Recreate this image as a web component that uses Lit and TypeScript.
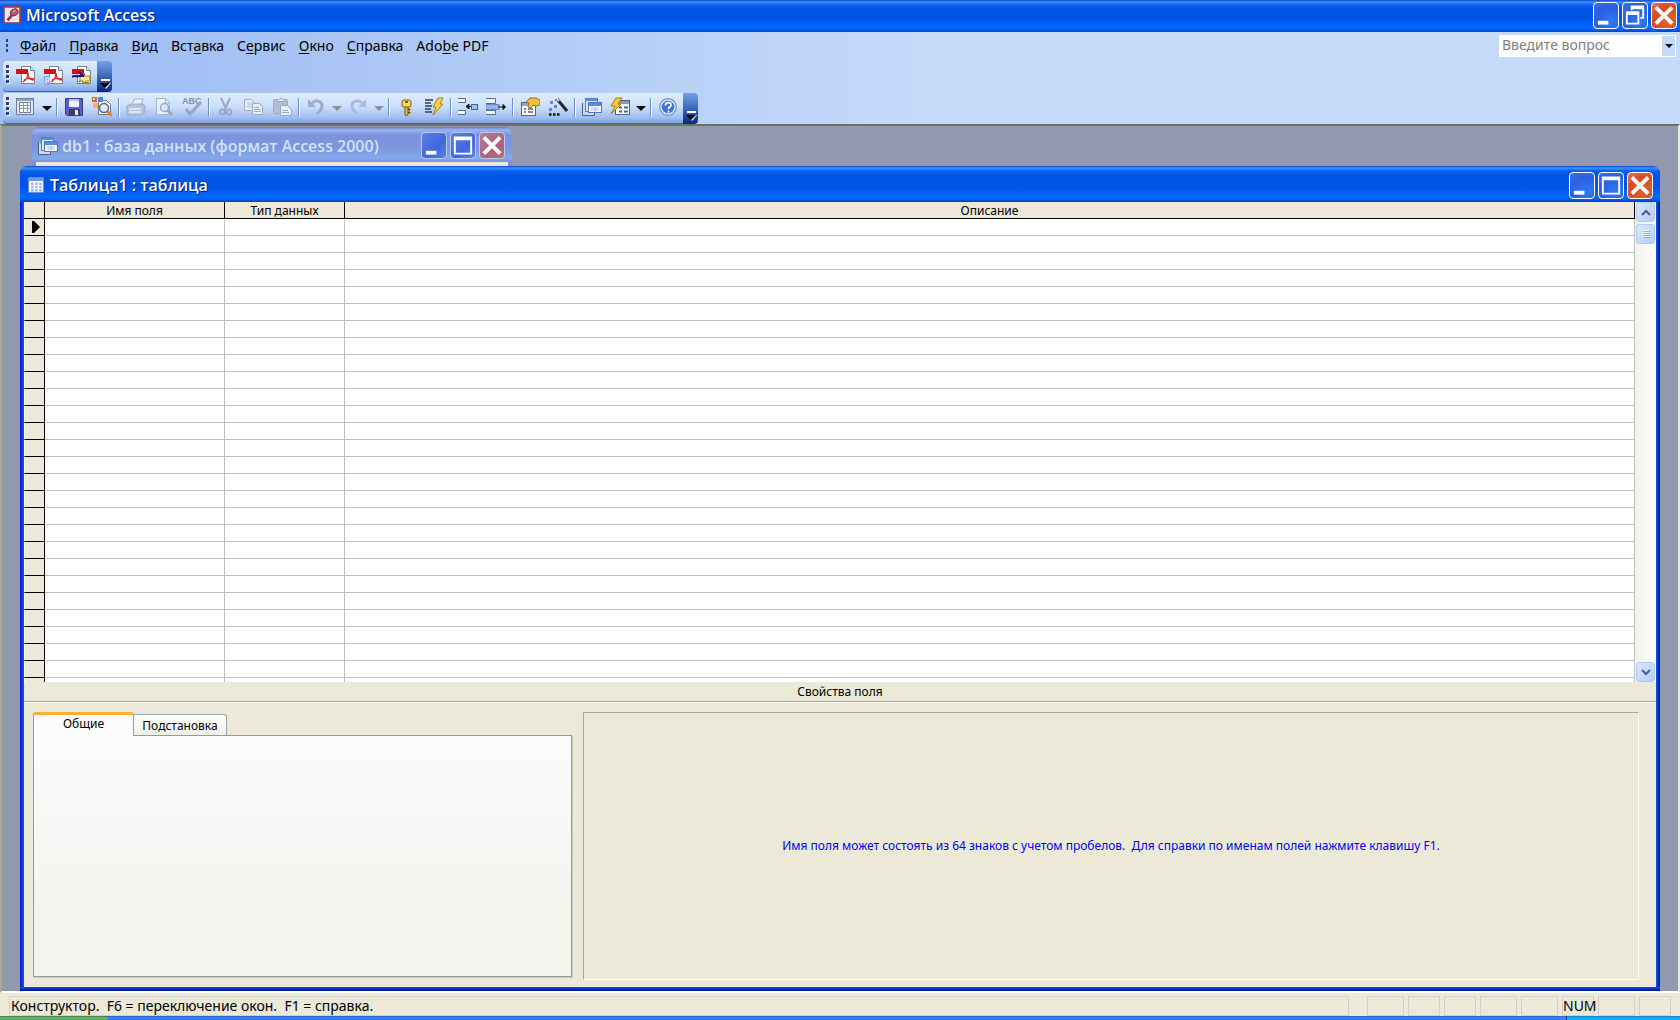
import { LitElement, html, svg, css, nothing, SVGTemplateResult } from "lit";
import { customElement, property, state } from "lit/decorators.js";
import { classMap } from "lit/directives/class-map.js";

const pdfPage = (extra: SVGTemplateResult) => svg`
  <path d="M5.500 1.500h9l4 4v13h-13z" fill="#fff" stroke="#7f8387"/>
  <path d="M14.500 1.500v4h4" fill="#dfe3ea" stroke="#7f8387"/>
  <rect x="0" y="4" width="12" height="5" fill="#d90f14"/>
  <path d="M12 8c0 5 3 7 6 7M12 8c0 4-2 7-5 9M8 15c3-2 6-2 10-1" fill="none" stroke="#e0262a" stroke-width="1.400"/>
  ${extra}`;

const lens = (x: number, y: number, tone: string, handle: string) => svg`
  <path d="M${x + 3} ${y + 3}l4 4" stroke="${handle}" stroke-width="3" stroke-linecap="round"/>
  <circle cx="${x}" cy="${y}" r="4.500" fill="#dcebfb" stroke="${tone}" stroke-width="1.500"/>`;

const ICONS: Record<string, SVGTemplateResult> = {
  pdf: pdfPage(svg``),
  pdfMail: pdfPage(svg`<rect x="0" y="11" width="6" height="9" fill="#7faaf2"/><path d="M2 19v-6h3v3H3" stroke="#fff" fill="none"/>`),
  pdfReview: pdfPage(svg`
    <path d="M8 11h10v5h-4l-3 3v-3H8z" fill="#f5e88a" stroke="#9b8520"/>
    <path d="M10 18h7" stroke="#9b8520" stroke-width="2"/>
    <path d="M0 12c4-3 5 1 7-1l5 0M7 7l4 4" fill="none" stroke="#12157e" stroke-width="2"/>`),
  view: svg`
    <rect x=".5" y="1.500" width="17" height="16" fill="#dfe6f2" stroke="#6f7f9b"/>
    <rect x="1" y="2" width="16" height="2" fill="#8ea5cf"/>
    <path d="M3.500 5.500h11v10h-11z" fill="#fff" stroke="#6c7a94"/>
    <path d="M3 8.500h12M3 11.500h12M7.500 5v11M11.500 5v11" stroke="#8b97ae"/>`,
  save: svg`
    <path d="M1.500 1.500h17v17H3l-1.500-1.500z" fill="#5b5fcd" stroke="#3a3a95"/>
    <rect x="5" y="2" width="10" height="8" fill="#eef3ff"/>
    <rect x="5" y="2" width="10" height="2" fill="#b9c4ee"/>
    <rect x="5" y="12" width="11" height="6.500" fill="#3b3b63"/>
    <rect x="11" y="13" width="3" height="5" fill="#e9eefb"/>`,
  search: svg`
    <path d="M6.500 3.500h8l4 4v10h-12z" fill="#f7fafe" stroke="#68778f"/>
    <rect x="0" y="0" width="5" height="5" fill="#ec5a26"/>
    <rect x="6" y="0" width="5" height="5" fill="#4c86e8"/>
    <rect x="1" y="6" width="5" height="5" fill="#f4bd2d"/>
    <rect x="1" y="1" width="2" height="2" fill="#ffd3a8"/>
    ${lens(12, 11, "#59697f", "#e08a1c")}`,
  print: svg`
    <path d="M6 8l2-6h9l-2 6z" fill="#eff4fc" stroke="#a3b2cd"/>
    <path d="M1 9l4-2h12l2 2v6l-3 3H1z" fill="#b4c2db" stroke="#9aaac8"/>
    <path d="M3 12h12M3 15h12" stroke="#eef3fb" stroke-width="1.500"/>`,
  preview: svg`
    <path d="M2.500 1.500h9l4 4v12h-13z" fill="#e9f0fb" stroke="#a3b2cd"/>
    <path d="M11.500 2v4h4" fill="none" stroke="#a3b2cd"/>
    <path d="M13 13l5 5" stroke="#98a8c6" stroke-width="3"/>
    <circle cx="10.500" cy="10.500" r="4" fill="#dbe7f8" stroke="#98a8c6" stroke-width="1.500"/>`,
  spell: svg`
    <text x="0" y="7" font-size="9" font-weight="700" font-family="Liberation Sans, sans-serif" fill="#8091b8">ABC</text>
    <path d="M4 12l4 5L19 5" fill="none" stroke="#94a5c8" stroke-width="3"/>`,
  cut: svg`
    <path d="M5 1l5 11M14 1L9 12" stroke="#98a8c6" stroke-width="2"/>
    <circle cx="6.500" cy="15" r="2.500" fill="none" stroke="#98a8c6" stroke-width="2"/>
    <circle cx="13" cy="15" r="2.500" fill="none" stroke="#98a8c6" stroke-width="2"/>`,
  copy: svg`
    <path d="M.5 2.500h7l3 3v8h-10z" fill="#e6eefb" stroke="#9fafcb"/>
    <path d="M3 6h5M3 8h5M3 10h5" stroke="#b2c0d8"/>
    <path d="M8.500 6.500h7l3 3v8h-10z" fill="#e6eefb" stroke="#98a8c6"/>
    <path d="M10 10.500h5M10 12.500h7M10 14.500h7" stroke="#9fafcb"/>`,
  paste: svg`
    <rect x="1.500" y="2.500" width="14" height="14" rx="1" fill="#b1bfd8" stroke="#98a8c6"/>
    <path d="M5 4.500v-2h2l1-1h2l1 1h2v2z" fill="#dbe5f5" stroke="#98a8c6"/>
    <path d="M8.500 8.500h7l4 4v6h-11z" fill="#e9f0fb" stroke="#98a8c6"/>
    <path d="M10 13.500h6M10 15.500h7" stroke="#98a8c6"/>`,
  undo: svg`
    <path d="M6 6c4-4 10-2 10 3 0 4-3 6-5 8" fill="none" stroke="#9badd0" stroke-width="3"/>
    <path d="M2 2v8h8z" fill="#9badd0"/>`,
  redo: svg`
    <path d="M14 6C10 2 4 4 4 9c0 4 3 6 5 8" fill="none" stroke="#a9bbdc" stroke-width="3"/>
    <path d="M18 2v8h-8z" fill="#a9bbdc"/>`,
  key: svg`
    <path d="M9 9h3v8l-1.500 2L9 18z" fill="#e8bb2c" stroke="#7d5c0a"/>
    <path d="M12 12h2v1h-2M12 15h2v1h-2" stroke="#7d5c0a"/>
    <rect x="6" y="3" width="9" height="7" rx="2" fill="#f7da57" stroke="#7d5c0a"/>
    <rect x="9" y="4" width="3" height="2" fill="#7d5c0a"/>`,
  index: svg`
    <path d="M1 3h8M1 6h6M1 9h7M1 12h6M1 15h7" stroke="#5a6376" stroke-width="2"/>
    <path d="M14 1h5l-3 6h3L9 18l3-8H9z" fill="#f8d648" stroke="#b07f12"/>`,
  insertRow: svg`
    <path d="M0 1.500h7.500v4H0M0 13.500h7.500v4H0" fill="#f2f6fc" stroke="#5c6b86"/>
    <path d="M8 9.500h6M11 7l-3 2.500 3 2.500z" fill="#111" stroke="#111"/>
    <rect x="13.500" y="7.500" width="6" height="5" fill="#9dc0f6" stroke="#44618f"/>`,
  deleteRow: svg`
    <path d="M0 1.500h9.500v5H0M0 13.500h9.500v4H0" fill="#f2f6fc" stroke="#5c6b86"/>
    <rect x="0" y="7.500" width="13" height="5" fill="#8db5f6" stroke="#6c86b4"/>
    <path d="M12 10h6M17 7.500l2.500 2.500-2.500 2.500z" fill="#111" stroke="#111"/>`,
  properties: svg`
    <rect x="1.500" y="5.500" width="14" height="13" fill="#fdfdfd" stroke="#55637c"/>
    <rect x="2" y="6" width="13" height="3" fill="#8fa5c9"/>
    <path d="M4 12h2M8 12h5M4 15h2M8 15h5" stroke="#55637c" stroke-width="1.500"/>
    <path d="M6 5l4-4h6l4 2v5l-4 1-3-1-2 3-3-1 1-4z" fill="#f0bd45" stroke="#a26f12"/>`,
  builder: svg`
    <path d="M9 2l10 12" stroke="#232833" stroke-width="3"/>
    <path d="M8 1l3 3" stroke="#dfe6f2" stroke-width="2"/>
    <path d="M2 4h3v3H2zM6 8h3v3H6zM1 11h3v3H1zM7 2h2v2H7z" fill="#6d83cb"/>
    <path d="M1 17.500h2.500M5 17.500h2.500M9 17.500h2.500" stroke="#111" stroke-width="2.500"/>`,
  database: svg`
    <path d="M.5 6v12.500h12V16" fill="#c9d9f4" stroke="#4c6292"/>
    <rect x="3.500" y="1.500" width="12" height="13" fill="#dce8fb" stroke="#5d7fbd"/>
    <rect x="4" y="2" width="11" height="2" fill="#5a8ce4"/>
    <rect x="6.500" y="5.500" width="13" height="10" fill="#fff" stroke="#4c78c4"/>
    <rect x="7" y="6" width="12" height="3" fill="#5a8ce4"/>
    <path d="M9 11h8M9 13h8M13 10v5" stroke="#a6bfea"/>`,
  newObject: svg`
    <rect x="5.500" y="3.500" width="14" height="14" fill="#fff" stroke="#4c5f86"/>
    <rect x="6" y="4" width="13" height="3" fill="#7d9bd1"/>
    <path d="M9 10.500h3M14 10.500h4M9 14.500h3M14 14.500h4" stroke="#4c5f86" stroke-width="2"/>
    <path d="M6 1h6L8 7h3L1 17l4-8H1z" fill="#f8c93c" stroke="#a9780f"/>`,
  help: svg`
    <circle cx="10" cy="10" r="8.500" fill="#3e74dc" stroke="#7fa3dc"/>
    <circle cx="10" cy="10" r="7" fill="none" stroke="#dbe8fc" stroke-width="1.500"/>
    <path d="M7.500 8.500c0-4 5.500-3.500 5.500-.5 0 2-2.500 2-2.500 4M10.500 13.500v2" fill="none" stroke="#fff" stroke-width="1.800"/>`,
  accessKey: svg`
    <rect x="1" y="1" width="18" height="18" fill="#f6e6ec" stroke="#9c3a58" stroke-width="2"/>
    <path d="M5 16l6-7" stroke="#8a3350" stroke-width="3"/>
    <ellipse cx="12.500" cy="7" rx="4.500" ry="3.500" fill="#b05a77" stroke="#7a2643" transform="rotate(-30 12.500 7)"/>
    <path d="M11 6l3-1" stroke="#f0cbd8"/>`,
  table: svg`
    <rect x="1" y="1" width="18" height="18" fill="#fdfefe" stroke="#8aa2d4"/>
    <rect x="1" y="1" width="18" height="4" fill="#6f97e4"/>
    <path d="M4 7h3v3H4zM9 7h3v3H9zM14 7h3v3h-3zM4 11h3v3H4zM9 11h3v3H9zM14 11h3v3h-3zM4 15h3v3H4zM9 15h3v3H9zM14 15h3v3h-3z" fill="#9fb6e2"/>`,
};

const icon = (name: string, size = 20) =>
  html`<svg width=${size} height=${size} viewBox="0 0 20 20" aria-hidden="true">${ICONS[name]}</svg>`;

type CaptionAction = "minimize" | "maximize" | "restore" | "close";

const CAPTION_SHAPES: Record<CaptionAction, SVGTemplateResult> = {
  minimize: svg`<path d="M4 18h11v4H4z" fill="#fff"/>`,
  maximize: svg`<path d="M3 3h19v19H3zM5 7v13h15V7z" fill="#fff" fill-rule="evenodd"/>`,
  restore: svg`
    <path d="M8 2h14v14h-4v-2h2V6H10v1H8z" fill="#fff"/>
    <path d="M3 8h14v14H3zM5 12v8h10v-8z" fill="#fff" fill-rule="evenodd"/>`,
  close: svg`<path d="M4 4l17 17M21 4L4 21" stroke="#fff" stroke-width="4"/>`,
};

const CAPTION_LABELS: Record<CaptionAction, string> = {
  minimize: "Свернуть",
  maximize: "Развернуть",
  restore: "Восстановить",
  close: "Закрыть",
};

@customElement("caption-bar")
class CaptionBar extends LitElement {
  @property() text = "";
  @property() glyph = "";
  @property({ type: Number }) size = 20;
  @property() variant: "app" | "active" | "inactive" = "active";

  static styles = css`
    :host { display: block; }
    .bar {
      display: flex; align-items: center; box-sizing: border-box;
      color: #fff; font: 600 16px "Open Sans", "Noto Sans", sans-serif;
      text-shadow: 1px 1px 1px #0a1883;
      background: linear-gradient(#0a45d0 0, #3b93ff 2px, #0a5fee 5px, #0054e3 10px, #0055e8 60%, #006aff 85%, #0062f5 92%, #0040c8 100%);
    }
    .app { height: 32px; padding: 0 3px 2px; gap: 5px; }
    .active, .inactive { height: 36px; padding: 2px 7px 0 8px; gap: 6px; border-radius: 8px 8px 0 0; }
    .inactive {
      height: 35px; padding-left: 6px; gap: 4px; color: #d5e1fa; text-shadow: none;
      background: linear-gradient(#6a7cd0 0, #9db4ee 3px, #7b93dc 8px, #7b96e0 60%, #84a9ea 90%, #7d92d8 100%);
    }
    h1 { flex: 1; margin: 0; font: inherit; white-space: nowrap; }
    .controls { display: flex; gap: 3px; }
    button {
      width: 26px; height: 27px; padding: 0; border: 1px solid #fff; border-radius: 4px; display: block;
      background: radial-gradient(circle at 70% 75%, #2f79f8, #2a5fe0 60%, #3d6fe6);
    }
    button.close { background: radial-gradient(circle at 70% 75%, #e0622f, #dc4a22 60%, #e57a5a); }
    .inactive button { border-color: #b8c9f6; background: linear-gradient(135deg, #5b80e4, #4066e2 60%, #5c86ea); }
    .inactive button.close { background: linear-gradient(135deg, #b07f9c, #b0607c 60%, #b4716f); }
    button svg { display: block; }
  `;

  render() {
    const actions: CaptionAction[] = ["minimize", this.variant === "app" ? "restore" : "maximize", "close"];
    return html`
      <header class="bar ${this.variant}">
        ${icon(this.glyph, this.size)}
        <h1>${this.text}</h1>
        <div class="controls">
          ${actions.map(
            (a) => html`<button type="button" class=${a} aria-label=${CAPTION_LABELS[a]}>
              <svg width="24" height="25" viewBox="0 0 25 25">${CAPTION_SHAPES[a]}</svg>
            </button>`
          )}
        </div>
      </header>`;
  }
}

interface Tool { kind: "button" | "arrow" | "sep"; icon?: string; label?: string; off?: boolean; }
const b = (name: string, label: string, off = false): Tool => ({ kind: "button", icon: name, label, off });
const arrow = (label: string, off = false): Tool => ({ kind: "arrow", label, off });
const sep: Tool = { kind: "sep" };

@customElement("tool-bar")
class ToolBar extends LitElement {
  @property({ attribute: false }) tools: Tool[] = [];
  @property() label = "";

  static styles = css`
    :host { display: flex; }
    .bar {
      display: flex; align-items: stretch; height: 31px; border-radius: 4px 0 0 4px; padding-right: 2px;
      background: linear-gradient(#dfecfe, #cbdffa 45%, #a3c0f0 80%, #7fa4e2);
      border-bottom: 1px solid #3f66b4; box-sizing: border-box;
    }
    .grip { width: 9px; padding: 4px 0 0 3px; box-sizing: border-box; }
    button {
      display: flex; align-items: center; justify-content: center; width: 28px; padding: 0 0 2px;
      border: 0; background: none;
    }
    .arrow { width: 14px; }
    .arrow svg { margin-top: 2px; }
    .sep { width: 1px; margin: 5px 2px 6px 2px; background: #6a8fd3; border-right: 1px solid #f1f6ff; }
    .cap {
      width: 15px; align-items: flex-end; border-radius: 0 4px 4px 0; margin-left: -1px;
      background: linear-gradient(#76a0e8, #3c66b8 50%, #06297c);
    }
  `;

  private tool(t: Tool) {
    if (t.kind === "sep") return html`<span class="sep"></span>`;
    if (t.kind === "arrow")
      return html`<button type="button" class="arrow" aria-label=${t.label} ?disabled=${t.off}>
        <svg width="10" height="5" viewBox="0 0 10 5"><path d="M0 0h10L5 5z" fill=${t.off ? "#8b8f97" : "#000"}/></svg>
      </button>`;
    return html`<button type="button" aria-label=${t.label} ?disabled=${t.off}>${icon(t.icon!)}</button>`;
  }

  render() {
    return html`
      <div class="bar" role="toolbar" aria-label=${this.label}>
        <span class="grip"><svg width="4" height="20" viewBox="0 0 4 20">
          ${[0, 5, 10, 15].map((y) => svg`<path d="M1 ${y + 1}h3v3H1z" fill="#fff"/><path d="M0 ${y}h3v3H0z" fill="#28418e"/>`)}
        </svg></span>
        ${this.tools.map((t) => this.tool(t))}
      </div>
      <button type="button" class="cap" aria-label="Параметры панели инструментов">
        <svg width="12" height="11" viewBox="0 0 12 11">
          <path d="M2 0h9v2H2z" fill="#fff"/><path d="M3 4h9l-5 6z" fill="#fff"/><path d="M1 4h10L6 9z" fill="#000"/>
        </svg>
      </button>`;
  }
}

@customElement("table-designer")
class TableDesigner extends LitElement {
  @state() private tab = 0;

  static styles = css`
    :host { display: flex; flex-direction: column; background: #ece9d8; font: 12px "Noto Sans", "DejaVu Sans Condensed", sans-serif; color: #000; }
    .grid { flex: 1; min-height: 0; display: flex; background: #fff; }
    .rows { flex: 1; overflow: hidden; contain: size; }
    table { width: 100%; border-collapse: separate; border-spacing: 0; table-layout: fixed; }
    th, td { box-sizing: border-box; height: 17px; padding: 0; line-height: 16px; }
    thead th { background: #ece9d8; font-weight: 400; text-align: center; border-right: 1px solid #000; border-bottom: 1px solid #000; padding-top: 1px; line-height: 15px; }
    tbody th { background: #ece9d8; border-right: 1px solid #000; border-bottom: 1px solid #000; border-left: 1px solid #fff; }
    td { border-right: 1px solid #c0c0c0; border-bottom: 1px solid #c0c0c0; }
    tbody svg { display: block; margin-left: 7px; }
    .selector { width: 21px; }
    .name { width: 180px; }
    .type { width: 120px; }
    .scroll { width: 21px; display: flex; flex-direction: column; gap: 2px; background: linear-gradient(90deg, #f2f1ea, #fdfdfb); }
    .scroll button {
      height: 20px; margin: 0 1px; padding: 0; border: 1px solid #b4c9f2; border-radius: 3px;
      background: linear-gradient(135deg, #dbe6fe, #b6cbf8); display: flex; align-items: center; justify-content: center;
    }
    .scroll .down { margin-top: auto; }
    .heading { height: 19px; line-height: 19px; text-align: center; margin: 0; font-size: 12px; font-weight: 400; border-bottom: 1px solid #a7a595; box-shadow: 0 1px #fff; }
    .pane { height: 285px; box-sizing: border-box; padding: 10px 17px 7px 9px; display: flex; gap: 11px; }
    .left { flex: 0 0 539px; display: flex; flex-direction: column; min-width: 0; }
    .tabs { display: flex; align-items: flex-end; height: 23px; }
    .tabs button {
      font: inherit; color: #000; height: 21px; width: 93px; padding: 0; border: 1px solid #91a7b4; border-bottom: 0; border-left: 0;
      border-radius: 0 3px 0 0; background: linear-gradient(#fff, #f0f0e8);
    }
    .tabs button.on {
      height: 24px; width: 101px; margin-bottom: -1px; border: 1px solid #919b9c; border-top: 3px solid #fbb034; border-bottom: 0;
      border-radius: 3px 3px 0 0; background: #fcfcfe; padding: 0 0 4px; z-index: 1;
    }
    .panel { flex: 1; border: 1px solid #919b9c; background: linear-gradient(#fcfcfe, #f4f3ee 70%); margin-bottom: 3px; box-shadow: 1px 1px 1px #d0cebf; }
    .hint {
      flex: 1; display: flex; align-items: center; justify-content: center; margin: 0; padding-bottom: 2px; color: #00f; white-space: pre;
      border: 1px solid; border-color: #a7a595 #fff #fff #a7a595;
    }
  `;

  render() {
    return html`
      <div class="grid">
        <div class="rows">
          <table>
            <thead><tr>
              <th class="selector"></th><th class="name">Имя поля</th><th class="type">Тип данных</th><th>Описание</th>
            </tr></thead>
            <tbody>
              ${Array.from({ length: 28 }, (_, i) => html`<tr>
                <th>${i === 0 ? html`<svg width="8" height="12" viewBox="0 0 8 12"><path d="M0 0h2l6 6-6 6H0z"/></svg>` : nothing}</th>
                <td></td><td></td><td></td>
              </tr>`)}
            </tbody>
          </table>
        </div>
        <div class="scroll">
          <button type="button" aria-label="Вверх"><svg width="10" height="7" viewBox="0 0 10 7"><path d="M1 6l4-4 4 4" fill="none" stroke="#4d6185" stroke-width="2"/></svg></button>
          <button type="button" class="thumb" aria-label="Ползунок"><svg width="8" height="8" viewBox="0 0 8 8"><path d="M0 .5h7M0 2.500h7M0 4.500h7M0 6.500h7" stroke="#eef4fe"/><path d="M1 1.500h7M1 3.500h7M1 5.500h7M1 7.500h7" stroke="#8cb0f8"/></svg></button>
          <button type="button" class="down" aria-label="Вниз"><svg width="10" height="7" viewBox="0 0 10 7"><path d="M1 1l4 4 4-4" fill="none" stroke="#4d6185" stroke-width="2"/></svg></button>
        </div>
      </div>
      <h2 class="heading">Свойства поля</h2>
      <div class="pane">
        <div class="left">
          <div class="tabs" role="tablist">
            ${["Общие", "Подстановка"].map((t, i) => html`<button type="button" role="tab"
              aria-selected=${this.tab === i} class=${classMap({ on: this.tab === i })}
              @click=${() => (this.tab = i)}>${t}</button>`)}
          </div>
          <div class="panel" role="tabpanel"></div>
        </div>
        <p class="hint">Имя поля может состоять из 64 знаков с учетом пробелов.  Для справки по именам полей нажмите клавишу F1.</p>
      </div>`;
  }
}

// Each entry: text before the access key, the key itself, text after it.
const MENU: [string, string, string][] = [
  ["", "Ф", "айл"], ["", "П", "равка"], ["", "В", "ид"], ["Вст", "а", "вка"],
  ["С", "е", "рвис"], ["", "О", "кно"], ["", "С", "правка"], ["Ado", "b", "e PDF"],
];

const PDF_TOOLS: Tool[] = [
  b("pdf", "Преобразовать в Adobe PDF"),
  b("pdfMail", "Преобразовать в PDF и отправить"),
  b("pdfReview", "Преобразовать в PDF и рецензировать"),
];

const DESIGN_TOOLS: Tool[] = [
  b("view", "Вид"), arrow("Выбор вида"), sep,
  b("save", "Сохранить"), b("search", "Найти файл"), sep,
  b("print", "Печать", true), b("preview", "Просмотр", true), b("spell", "Орфография", true), sep,
  b("cut", "Вырезать", true), b("copy", "Копировать", true), b("paste", "Вставить", true), sep,
  b("undo", "Отменить", true), arrow("Список отмены", true), b("redo", "Вернуть", true), arrow("Список возврата", true), sep,
  b("key", "Ключевое поле"), b("index", "Индексы"), sep,
  b("insertRow", "Добавить строки"), b("deleteRow", "Удалить строки"), sep,
  b("properties", "Свойства"), b("builder", "Построить"), sep,
  b("database", "Окно базы данных"), b("newObject", "Новый объект"), arrow("Выбор объекта"), sep,
  b("help", "Справка"),
];

@customElement("app-root")
class AppRoot extends LitElement {
  static styles = css`
    :host {
      display: flex; flex-direction: column; height: 100vh; overflow: hidden;
      font: 14px "Noto Sans", "DejaVu Sans Condensed", sans-serif; color: #000; background: #ece9d8;
    }
    .chrome { background: linear-gradient(90deg, #9ebef5, #a6c2f5 15%, #c4daf9 55%, #c4daf9); height: 92px; display: flex; flex-direction: column; }
    .menu { display: flex; align-items: center; height: 29px; padding: 0 4px 2px 6px; box-sizing: border-box; }
    .menu > svg { margin-right: 4px; }
    nav { display: flex; flex: 1; gap: 1px; }
    nav button { font: inherit; border: 0; background: none; padding: 0 6px; height: 24px; color: #000; white-space: nowrap; }
    u { text-underline-offset: 2px; }
    .ask { display: flex; width: 177px; height: 22px; background: #fff; box-sizing: border-box; }
    .ask input { flex: 1; min-width: 0; border: 0; outline: 0; background: none; font: inherit; padding: 0 0 2px 3px; }
    .ask input::placeholder { color: #808080; opacity: 1; }
    .ask button { width: 13px; margin: 1px; padding: 0; border: 0; background: #c4daf9; display: flex; align-items: center; justify-content: center; }
    .bars { display: flex; flex-direction: column; gap: 1px; padding-left: 3px; }
    .desktop {
      flex: 1; min-height: 0; position: relative; overflow: hidden; background: #9199ae;
      border: 2px solid; border-color: #716f64 #ece9d8 #fff #aca899;
    }
    .window { position: absolute; display: flex; flex-direction: column; }
    .db { left: 30px; top: 1px; width: 480px; height: 80px; background: #7b8ddb; border-radius: 8px 8px 0 0; }
    .db .body { flex: 1; margin: 0 4px; background: #ece9d8; }
    .designer {
      left: 18px; right: 18px; top: 40px; bottom: 0; border-radius: 8px 8px 0 0;
      background: linear-gradient(90deg, #0019cf, #0a5aef 4px, #0a5aef calc(100% - 4px), #00138c);
    }
    .designer table-designer { flex: 1; min-height: 0; margin: 0 4px; }
    .designer .edge { height: 4px; background: linear-gradient(#0a4df0, #00138c); }
    .status { display: flex; align-items: center; height: 23px; padding: 2px 9px 0; gap: 4px; box-sizing: border-box; }
    .status span { height: 18px; line-height: 18px; border: 1px solid #d2d0c8; white-space: pre; text-align: center; }
    .status .message { flex: 1; text-align: left; margin-right: 14px; padding-left: 1px; }
    .w30 { width: 30px; }
    .w36 { width: 35px; }
    .taskbar { display: flex; height: 4px; background: linear-gradient(#245edb, #3f8cf0 50%, #2f6fe0); }
    .start { width: 108px; background: linear-gradient(#2f7a2f, #7dbb7d 50%, #4d9a4d); border-radius: 0 4px 0 0; }
    .tray { width: 113px; margin-left: auto; border-left: 1px solid #093a80; background: linear-gradient(#1278d4, #19b9f4 60%, #14a0ea); }
  `;

  render() {
    const panes = ["w36", "w30", "w30", "w36", "w36", "w30", "w36", "w30"];
    return html`
      <caption-bar variant="app" glyph="accessKey" size="18" text="Microsoft Access"></caption-bar>
      <div class="chrome">
        <div class="menu">
          <svg width="4" height="14" viewBox="0 0 4 14">
            ${[0, 5, 10].map((y) => svg`<path d="M0 ${y}h2v3H0z" fill="#28418e"/>`)}
          </svg>
          <nav aria-label="Меню">
            ${MENU.map(([pre, key, post]) => html`<button type="button">${pre}<u>${key}</u>${post}</button>`)}
          </nav>
          <div class="ask">
            <input type="text" placeholder="Введите вопрос" aria-label="Введите вопрос">
            <button type="button" aria-label="Список вопросов"><svg width="8" height="4" viewBox="0 0 8 4"><path d="M0 0h8L4 4z"/></svg></button>
          </div>
        </div>
        <div class="bars">
          <tool-bar label="PDFMaker" .tools=${PDF_TOOLS}></tool-bar>
          <tool-bar label="Конструктор таблиц" .tools=${DESIGN_TOOLS}></tool-bar>
        </div>
      </div>
      <main class="desktop">
        <section class="window db">
          <caption-bar variant="inactive" glyph="database" text="db1 : база данных (формат Access 2000)"></caption-bar>
          <div class="body"></div>
        </section>
        <section class="window designer">
          <caption-bar glyph="table" size="16" text="Таблица1 : таблица"></caption-bar>
          <table-designer></table-designer>
          <div class="edge"></div>
        </section>
      </main>
      <footer class="status">
        <span class="message">Конструктор.  F6 = переключение окон.  F1 = справка.</span>
        ${panes.map((w, i) => html`<span class=${w}>${i === 5 ? "NUM" : ""}</span>`)}
      </footer>
      <div class="taskbar"><div class="start"></div><div class="tray"></div></div>`;
  }
}
